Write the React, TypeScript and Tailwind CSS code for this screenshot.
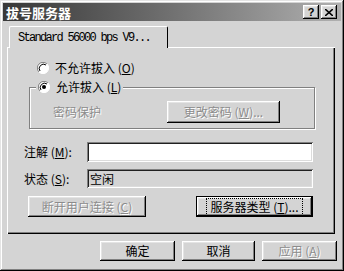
import React from 'react';

const cjk = "font-['Noto_Sans_CJK_SC','Liberation_Sans',sans-serif]";

// Win98 style raised button
const raised =
  'shadow-[inset_-1px_-1px_#000,inset_1px_1px_#fff,inset_-2px_-2px_#808080,inset_2px_2px_#e4e4e4]';
const sunken =
  'shadow-[inset_1px_1px_#808080,inset_-1px_-1px_#fff,inset_2px_2px_#202020,inset_-2px_-2px_#dcdcdc]';
const disabledText = 'text-[#8c8c8c] [text-shadow:1px_1px_0_#fff]';

const Key = ({ k }: { k: string }) => (
  <span>
    (<span className="underline underline-offset-1">{k}</span>)
  </span>
);

const Radio = ({ checked }: { checked?: boolean }) => (
  <svg width="12" height="12" viewBox="0 0 12 12" className="shrink-0">
    <circle cx="6" cy="6" r="5.5" fill="#fff" />
    <path d="M10 2 A5.5 5.5 0 0 0 2 10" fill="none" stroke="#808080" strokeWidth="1" />
    <path d="M9 3 A4.3 4.3 0 0 0 3 9" fill="none" stroke="#000" strokeWidth="1" />
    <path d="M2 10 A5.5 5.5 0 0 0 10 2" fill="none" stroke="#fff" strokeWidth="1" />
    {checked && <circle cx="6" cy="6" r="2" fill="#000" />}
  </svg>
);

const Button = ({
  children,
  className = '',
  disabled,
  focused,
}: {
  children: React.ReactNode;
  className?: string;
  disabled?: boolean;
  focused?: boolean;
}) => (
  <div
    className={`flex items-center justify-center bg-[#d4d4d4] text-[12px] leading-none ${cjk} ${
      focused ? 'border border-black' : ''
    } ${raised} ${disabled ? disabledText : 'text-black'} ${className}`}
  >
    {focused ? (
      <span className="border border-dotted border-black px-[3px] py-[2px]">{children}</span>
    ) : (
      children
    )}
  </div>
);

export default function App() {
  return (
    <div
      className={`w-[344px] h-[271px] bg-[#d4d4d4] p-[3px] flex flex-col ${cjk} shadow-[inset_-1px_-1px_#000,inset_1px_1px_#e4e4e4,inset_-2px_-2px_#808080,inset_2px_2px_#fff]`}
    >
      {/* barre de titre */}
      <div className="h-[18px] flex items-center bg-gradient-to-r from-[#383838] to-[#b0b0b0] pl-[3px] pr-[4px]">
        <span className="text-white font-bold text-[13px] leading-none">拔号服务器</span>
        <div className="ml-auto flex gap-[2px]">
          <div
            className={`w-[16px] h-[14px] bg-[#d4d4d4] ${raised} flex items-center justify-center text-[11px] font-bold leading-none font-['Liberation_Sans',sans-serif]`}
          >
            ?
          </div>
          <div className={`w-[16px] h-[14px] bg-[#d4d4d4] ${raised} flex items-center justify-center`}>
            <svg width="8" height="7" viewBox="0 0 8 7">
              <path d="M0 0 L8 7 M8 0 L0 7" stroke="#000" strokeWidth="1.6" />
            </svg>
          </div>
        </div>
      </div>

      {/* onglet + panneau */}
      <div className="px-[4px] pt-[5px]">
        <div className="ml-[2px] w-[159px] h-[22px] flex items-center pl-[8px] border-t border-l border-white border-r border-r-black rounded-t-[2px] relative z-10 bg-[#d4d4d4] -mb-[1px]">
          <span className="font-['Liberation_Mono',monospace] text-[12px] tracking-[-1.7px] text-black leading-none">
            Standard 56000 bps V9...
          </span>
        </div>
        <div className="w-[328px] h-[187px] border-t border-l border-white shadow-[inset_-1px_-1px_#000,inset_-2px_-2px_#808080] pl-[1px] pt-[1px] flex flex-col">
          {/* radio 1 */}
          <div className="ml-[28px] mt-[12px] h-[14px] flex items-center gap-[6px] text-[12px] leading-none text-black">
            <Radio />
            <span>
              不允许拔入 <Key k="O" />
            </span>
          </div>

          {/* groupe */}
          <fieldset className="ml-[20px] mt-[5px] w-[286px] border border-[#808080] shadow-[inset_1px_1px_#fff,1px_1px_#fff] pb-[5px]">
            <legend className="ml-[6px] px-[2px] h-[14px] bg-[#d4d4d4] flex items-center gap-[6px] text-[12px] leading-none text-black">
              <Radio checked />
              <span>
                允许拔入 <Key k="L" />
              </span>
            </legend>
            <div className="mt-[7px] flex items-center">
              <span className={`ml-[23px] text-[12px] leading-none ${disabledText}`}>密码保护</span>
              <Button disabled className="ml-[66px] w-[113px] h-[22px]">
                <span>
                  更改密码 <Key k="W" />
                  ...
                </span>
              </Button>
            </div>
          </fieldset>

          {/* annotation */}
          <div className="mt-[13px] flex items-center">
            <span className="ml-[15px] w-[63px] text-[12px] leading-none text-black">
              注解 <Key k="M" />:
            </span>
            <div className={`w-[226px] h-[20px] bg-white ${sunken}`} />
          </div>

          {/* état */}
          <div className="mt-[7px] flex items-center">
            <span className="ml-[15px] w-[63px] text-[12px] leading-none text-black">
              状态 <Key k="S" />:
            </span>
            <div className={`w-[226px] h-[19px] bg-[#d4d4d4] ${sunken} flex items-center pl-[3px] text-[12px] leading-none text-black`}>
              空闲
            </div>
          </div>

          {/* boutons du panneau */}
          <div className="mt-[8px] flex items-center">
            <Button disabled className="ml-[19px] w-[118px] h-[21px]">
              <span>
                断开用户连接 <Key k="C" />
              </span>
            </Button>
            <Button focused className="ml-[50px] w-[117px] h-[21px]">
              <span>
                服务器类型 <Key k="T" />
                ...
              </span>
            </Button>
          </div>
        </div>
      </div>

      {/* boutons du bas */}
      <div className="mt-[7px] flex justify-end gap-[7px] pr-[4px]">
        <Button className="w-[75px] h-[20px]">确定</Button>
        <Button className="w-[73px] h-[20px]">取消</Button>
        <Button disabled className="w-[75px] h-[20px]">
          <span>
            应用 <Key k="A" />
          </span>
        </Button>
      </div>
    </div>
  );
}
